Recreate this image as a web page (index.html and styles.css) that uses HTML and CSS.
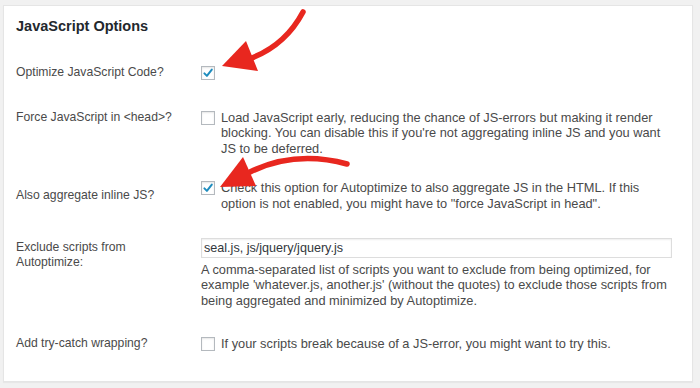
FILE: index.html
```html
<!DOCTYPE html>
<html lang="en">
<head>
  <meta charset="UTF-8" />
  <title>JavaScript Options</title>
  <link rel="stylesheet" href="styles.css">
</head>
<body>
  <div class="postbox">
    <h2 class="box-title">JavaScript Options</h2>

    <div class="row row-optimize">
      <div class="label">Optimize JavaScript Code?</div>
      <div class="field">
        <span class="checkbox checked">
          <svg viewBox="0 0 14 14" width="14" height="14"><path d="M3.4 7.4 L5.9 9.9 L10.8 3.6" /></svg>
        </span>
      </div>
    </div>

    <div class="row row-force">
      <div class="label">Force JavaScript in &lt;head&gt;?</div>
      <div class="field check-field">
        <span class="checkbox"></span>
        <p>Load JavaScript early, reducing the chance of JS-errors but making it render blocking. You can disable this if you're not aggregating inline JS and you want JS to be deferred.</p>
      </div>
    </div>

    <div class="row row-inline">
      <div class="label">Also aggregate inline JS?</div>
      <div class="field check-field">
        <span class="checkbox checked">
          <svg viewBox="0 0 14 14" width="14" height="14"><path d="M3.4 7.4 L5.9 9.9 L10.8 3.6" /></svg>
        </span>
        <p>Check this option for Autoptimize to also aggregate JS in the HTML. If this option is not enabled, you might have to "force JavaScript in head".</p>
      </div>
    </div>

    <div class="row row-exclude">
      <div class="label">Exclude scripts from Autoptimize:</div>
      <div class="field">
        <input type="text" class="text-input" value="seal.js, js/jquery/jquery.js" />
        <p>A comma-separated list of scripts you want to exclude from being optimized, for example 'whatever.js, another.js' (without the quotes) to exclude those scripts from being aggregated and minimized by Autoptimize.</p>
      </div>
    </div>

    <div class="row row-trycatch">
      <div class="label">Add try-catch wrapping?</div>
      <div class="field check-field">
        <span class="checkbox"></span>
        <p>If your scripts break because of a JS-error, you might want to try this.</p>
      </div>
    </div>
  </div>

  <svg class="arrows" width="700" height="388" viewBox="0 0 700 388">
    <path class="shaft" d="M303 12 Q 285 46 249 59" />
    <polygon class="head" points="222,66 246,41 258,71" />
    <path class="shaft" d="M347 164 Q 295 150 250 172" />
    <polygon class="head" points="220,187 243,157 256,186" />
  </svg>
</body>
</html>
```

FILE: styles.css
```css
:root {
  --text-color: #4a4a4a;
  --title-color: #23282d;
  --border-color: #e5e5e5;
  --check-blue: #1e8cbe;
  --arrow-red: #e8271f;
}

* {
  box-sizing: border-box;
}

body {
  margin: 0;
  width: 700px;
  height: 388px;
  background: #f1f1f1;
  font-family: "Liberation Sans", Arial, sans-serif;
  font-size: 12.2px;
  line-height: 15.6px;
  color: var(--text-color);
  position: relative;
  overflow: hidden;
}

.postbox {
  margin: 5px 0 0 3px;
  width: 690px;
  height: 377px;
  background: #fff;
  border: 1px solid var(--border-color);
  box-shadow: 0 1px 1px rgba(0, 0, 0, 0.04);
  padding: 11px 12px 0 12px;
}

.box-title {
  margin: 0;
  font-size: 14.5px;
  line-height: 18px;
  font-weight: bold;
  color: var(--title-color);
}

.row {
  display: grid;
  grid-template-columns: 185px 471px;
  align-items: start;
}

.row-optimize { margin-top: 30px; }
.row-force { margin-top: 29px; }
.row-inline { margin-top: 24px; }
.row-exclude { margin-top: 26px; }
.row-trycatch { margin-top: 28px; }

.label {
  padding-right: 28px;
}

.row-inline .label {
  padding-top: 8px;
}

.row-exclude .label {
  padding-top: 2px;
}

.field p {
  margin: 0;
  font-size: 12.8px;
}

.check-field {
  display: flex;
  gap: 6px;
  align-items: flex-start;
}

.check-field p {
  width: 451px;
}

.checkbox {
  flex: none;
  display: block;
  width: 14px;
  height: 14px;
  margin-top: 1px;
  border: 1px solid #b4b9be;
  background: #fff;
  box-shadow: inset 0 1px 2px rgba(0, 0, 0, 0.1);
  position: relative;
}

.checkbox svg {
  position: absolute;
  top: -1px;
  left: -1px;
}

.checkbox path {
  fill: none;
  stroke: var(--check-blue);
  stroke-width: 2;
  stroke-linecap: round;
  stroke-linejoin: round;
}

.text-input {
  display: block;
  width: 471px;
  height: 20px;
  margin: 0 0 4px 0;
  padding: 0 2px;
  border: 1px solid #ddd;
  box-shadow: inset 0 1px 2px rgba(0, 0, 0, 0.07);
  font-family: inherit;
  font-size: 12.6px;
  color: #32373c;
  background: #fff;
}

.arrows {
  position: absolute;
  top: 0;
  left: 0;
  pointer-events: none;
}

.arrows .shaft {
  fill: none;
  stroke: var(--arrow-red);
  stroke-width: 5.5;
  stroke-linecap: round;
}

.arrows .head {
  fill: var(--arrow-red);
}
```
